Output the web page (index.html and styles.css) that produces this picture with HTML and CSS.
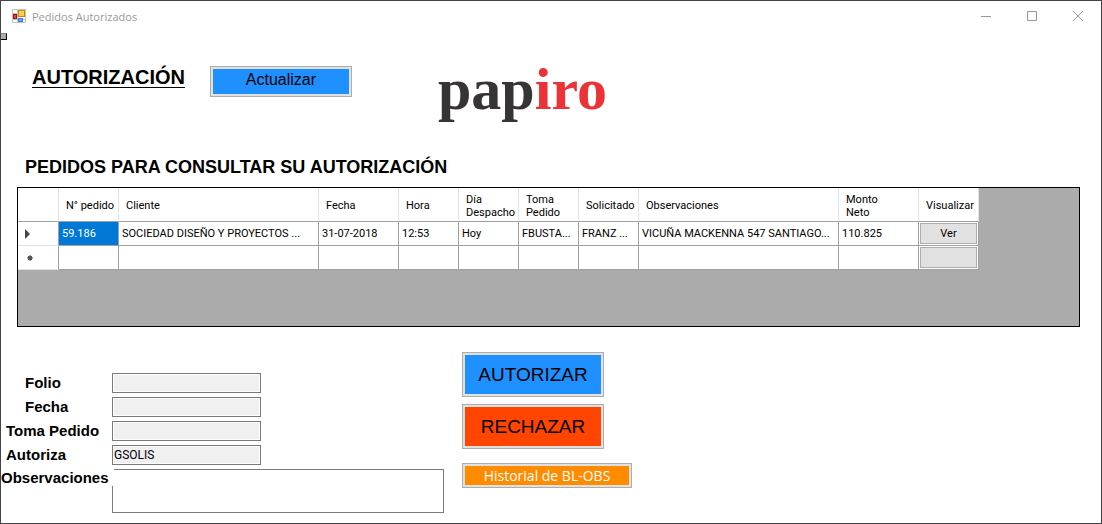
FILE: index.html
```html
<!DOCTYPE html>
<html lang="es">
<head>
<meta charset="utf-8">
<title>Pedidos Autorizados</title>
<link rel="stylesheet" href="styles.css">
</head>
<body>
<div class="window">
  <header class="titlebar">
    <svg class="app-icon" width="14" height="14" viewBox="0 0 14 14" aria-hidden="true">
      <rect x=".5" y=".5" width="13" height="13" fill="#fff" stroke="#c4c4c4"/>
      <path d="M5.500 0v14M0 4.500h6M0 10.500h14" stroke="#c4c4c4"/>
      <rect x="6.500" y="1.500" width="6" height="6" fill="#fbd04a" stroke="#c58a08"/>
      <rect x="1.500" y="5.500" width="3" height="4" fill="#e0463c" stroke="#a3100c"/>
      <rect x="6.500" y="9.500" width="4" height="3" fill="#6ca6f5" stroke="#3d78d8"/>
    </svg>
    <span class="title">Pedidos Autorizados</span>
    <div class="controls">
      <button class="control" type="button" aria-label="Minimizar"><svg width="12" height="12" viewBox="0 0 12 12"><path d="M1 6.500h10"/></svg></button>
      <button class="control" type="button" aria-label="Maximizar"><svg width="12" height="12" viewBox="0 0 12 12"><path d="M1.500 1.500h9v9h-9z"/></svg></button>
      <button class="control" type="button" aria-label="Cerrar"><svg width="12" height="12" viewBox="0 0 12 12"><path d="M1 1l10 10M11 1L1 11"/></svg></button>
    </div>
  </header>
  <span class="handle"></span>

  <main>
    <div class="top">
      <h1>AUTORIZACIÓN</h1>
      <button class="btn btn-refresh" type="button">Actualizar</button>
      <div class="logo">pap<span class="logo-accent">iro</span></div>
    </div>

    <h2>PEDIDOS PARA CONSULTAR SU AUTORIZACIÓN</h2>

    <div class="grid">
      <table>
        <colgroup>
          <col class="w-head"><col class="w-60"><col class="w-200"><col class="w-80"><col class="w-60"><col class="w-60"><col class="w-60"><col class="w-60"><col class="w-200"><col class="w-80"><col class="w-60">
        </colgroup>
        <thead>
          <tr>
            <th></th><th>N° pedido</th><th>Cliente</th><th>Fecha</th><th>Hora</th><th>Día Despacho</th><th>Toma Pedido</th><th>Solicitado</th><th>Observaciones</th><th>Monto<br>Neto</th><th>Visualizar</th>
          </tr>
        </thead>
        <tbody>
          <tr>
            <td class="row-head"><svg width="6" height="10" viewBox="0 0 6 10"><path d="M0 0l5 5-5 5z" fill="#444"/></svg></td>
            <td class="selected">59.186</td><td>SOCIEDAD DISEÑO Y PROYECTOS ...</td><td>31-07-2018</td><td>12:53</td><td>Hoy</td><td>FBUSTA...</td><td>FRANZ ...</td><td>VICUÑA MACKENNA 547 SANTIAGO...</td><td>110.825</td>
            <td class="action"><button class="cell-btn" type="button">Ver</button></td>
          </tr>
          <tr>
            <td class="row-head new"><svg width="6" height="6" viewBox="0 0 6 6"><circle cx="3" cy="3" r="2" fill="#444"/><path d="M3 0v6M0 3h6M1 1l4 4M5 1L1 5" stroke="#555"/></svg></td>
            <td></td><td></td><td></td><td></td><td></td><td></td><td></td><td></td><td></td>
            <td class="action"><button class="cell-btn" type="button" aria-label="Ver pedido nuevo"></button></td>
          </tr>
        </tbody>
      </table>
    </div>

    <div class="bottom">
      <form class="form">
        <label class="indent-lg" for="folio">Folio</label><input id="folio" type="text" readonly>
        <label class="indent-lg" for="fecha">Fecha</label><input id="fecha" type="text" readonly>
        <label class="indent-sm" for="toma">Toma Pedido</label><input id="toma" type="text" readonly>
        <label class="indent-sm" for="autoriza">Autoriza</label><input id="autoriza" type="text" value="GSOLIS" readonly>
        <label class="over" for="obs">Observaciones</label><textarea id="obs"></textarea>
      </form>
      <div class="actions">
        <button class="btn btn-blue" type="button">AUTORIZAR</button>
        <button class="btn btn-red" type="button">RECHAZAR</button>
        <button class="btn btn-orange" type="button">Historial de BL-OBS</button>
      </div>
    </div>
  </main>
</div>
</body>
</html>
```
FILE: styles.css
```css
* {
  box-sizing: border-box;
}

body {
  margin: 0;
  font-family: "Liberation Sans", Arial, sans-serif;
  color: #000;
  background: #fff;
}

button,
input,
textarea {
  font: inherit;
  color: inherit;
  margin: 0;
  border-radius: 0;
}

.window {
  position: relative;
  min-height: 100vh;
  background: #fff;
  border: 1px solid #45444a;
}

.titlebar {
  display: flex;
  align-items: center;
  height: 30px;
  padding-left: 11px;
}

.title {
  flex: 1;
  margin-left: 6px;
  padding-top: 2px;
  font: 11px/16px "Open Sans", sans-serif;
  color: #999;
}

.controls {
  display: flex;
}

.control {
  display: flex;
  align-items: center;
  justify-content: center;
  width: 46px;
  height: 30px;
  padding: 0;
  border: 0;
  background: none;
}

.control svg {
  fill: none;
  stroke: #999;
}

.handle {
  position: absolute;
  top: 32px;
  left: 0;
  width: 6px;
  height: 7px;
  background: #aaa;
  border: 1px solid #000;
  border-top-color: #888;
  border-left: 0;
}

.top {
  display: flex;
  align-items: flex-start;
  height: 126px;
  padding: 20px 0 0 31px;
}

h1 {
  margin: 14px 25px 0 0;
  font-size: 20px;
  line-height: 24px;
  text-decoration: underline;
  text-decoration-thickness: 1px;
  text-underline-offset: 3px;
}

.btn {
  padding: 0;
  border: 1px solid #adadad;
  box-shadow: inset 0 0 0 2px #e1e1e1;
  text-align: center;
}

.btn-refresh {
  width: 142px;
  height: 31px;
  margin-top: 15px;
  padding-bottom: 4px;
  background: #1e90ff;
  font-size: 16px;
}

.logo {
  margin-left: 86px;
  padding-top: 2px;
  font: bold 60px/72px "Liberation Serif", serif;
  color: #373435;
}

.logo-accent {
  color: #ed3237;
}

h2 {
  margin: 0 0 10px 24px;
  font-size: 18px;
  line-height: 20px;
}

.grid {
  min-height: 140px;
  margin: 0 21px 0 16px;
  background: #ababab;
  border: 1px solid #000;
  overflow: hidden;
}

table {
  width: 961px;
  table-layout: fixed;
  border-collapse: separate;
  border-spacing: 0;
  font-family: Roboto, sans-serif;
  font-size: 11px;
  line-height: 13px;
  background: #fff;
}

.w-head {
  width: 41px;
}

.w-60 {
  width: 60px;
}

.w-80 {
  width: 80px;
}

.w-200 {
  width: 200px;
}

th,
td {
  padding: 0 0 0 3px;
  text-align: left;
  border-right: 1px solid #a0a0a0;
  border-bottom: 1px solid #a0a0a0;
}

td {
  height: 24px;
  white-space: nowrap;
  overflow: hidden;
}

th {
  height: 34px;
  padding: 2px 0 0 7px;
  font-weight: normal;
  border-right-color: #e3e3e3;
}

td.row-head {
  padding-left: 7px;
  line-height: 0;
  border-bottom-color: #e3e3e3;
}

td.new {
  padding-left: 9px;
}

td.selected {
  background: #0078d7;
  color: #fff;
}

td.action {
  padding: 1px;
}

.cell-btn {
  display: block;
  width: 100%;
  height: 21px;
  padding: 0;
  background: #e1e1e1;
  border: 1px solid #adadad;
}

.bottom {
  display: flex;
  align-items: flex-start;
  gap: 18px;
  padding-top: 25px;
}

.form {
  display: grid;
  grid-template-columns: 111px 332px;
  row-gap: 4px;
  padding-top: 21px;
}

.form label {
  font-size: 15px;
  font-weight: bold;
  line-height: 20px;
}

.form .indent-lg {
  padding-left: 24px;
}

.form .indent-sm {
  padding-left: 5px;
}

.form .over {
  position: relative;
  z-index: 1;
  width: 113px;
  height: 17px;
  line-height: 17px;
  background: #fff;
}

.form input {
  width: 149px;
  height: 20px;
  padding: 0 1px;
  border: 1px solid #7a7a7a;
  box-shadow: inset 0 0 0 1px #fff;
  background: #f0f0f0;
  font-family: Roboto, sans-serif;
  font-size: 12px;
}

.form textarea {
  height: 44px;
  border: 1px solid #7a7a7a;
  background: #fff;
  resize: none;
}

.actions {
  display: flex;
  flex-direction: column;
  align-items: flex-start;
}

.btn-blue,
.btn-red {
  width: 142px;
  height: 45px;
  font-size: 19px;
}

.btn-blue {
  margin-bottom: 7px;
  background: #1e90ff;
}

.btn-red {
  margin-bottom: 14px;
  background: #ff4500;
}

.btn-orange {
  width: 170px;
  height: 25px;
  background: #ff8c00;
  color: #fff;
  font-family: "Open Sans", sans-serif;
  font-size: 14px;
}
```
